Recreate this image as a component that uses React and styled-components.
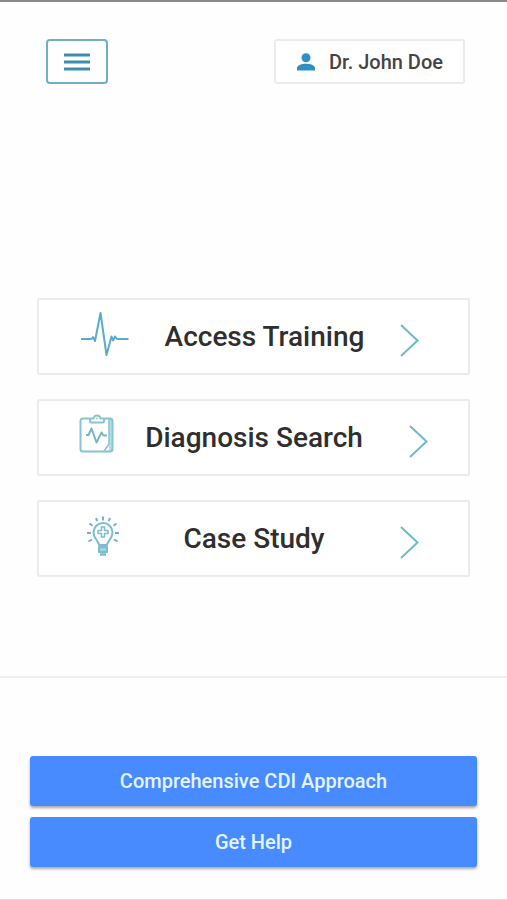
import React from 'react';
import styled, { createGlobalStyle } from 'styled-components';

const GlobalStyle = createGlobalStyle`
    * {
        box-sizing: border-box;
    }

    body {
        margin: 0;
        background-color: #fefefe;
        font-family: Roboto, 'Liberation Sans', sans-serif;
    }
`;

const Page = styled.div`
    display: flex;
    flex-direction: column;
    min-height: 100vh;
    border-top: 2px solid #8b898b;
    border-bottom: 1px solid #dedede;
`;

const Header = styled.header`
    display: flex;
    justify-content: space-between;
    padding: 37px 42px 0 46px;
`;

const MenuButton = styled.button`
    display: flex;
    align-items: center;
    justify-content: center;
    width: 62px;
    height: 45px;
    padding: 0;
    border: 2px solid #6fafc6;
    border-radius: 4px;
    background-color: #fff;
    cursor: pointer;
`;

const UserButton = styled.button`
    display: flex;
    align-items: center;
    gap: 13px;
    height: 45px;
    padding: 0 20px;
    border: 2px solid #ebebeb;
    border-radius: 3px;
    background-color: #fff;
    color: #444;
    font-family: inherit;
    font-size: 20px;
    font-weight: 500;
    cursor: pointer;
`;

const Menu = styled.main`
    display: flex;
    flex: 1;
    flex-direction: column;
    justify-content: center;
    gap: 24px;
    padding: 115px 37px 0;
`;

const Card = styled.button`
    display: flex;
    align-items: center;
    width: 100%;
    height: 77px;
    padding: 0 ${(props) => props.$right}px 0 ${(props) => props.$left}px;
    border: 2px solid #ebebeb;
    border-radius: 2px;
    background-color: #fff;
    font-family: inherit;
    cursor: pointer;
`;

const CardTitle = styled.span`
    flex: 1;
    color: #2f2f2f;
    font-size: 28px;
    font-weight: 500;
    line-height: 36px;
    text-align: center;
    white-space: nowrap;
`;

const Arrow = styled.span`
    display: flex;
    justify-content: flex-end;
    width: ${(props) => props.$width}px;
`;

const Footer = styled.footer`
    display: flex;
    flex-direction: column;
    gap: 11px;
    padding: 78px 30px 32px;
    border-top: 2px solid #efefef;
`;

const FooterButton = styled.button`
    height: 50px;
    padding: 0 16px;
    border: none;
    border-radius: 3px;
    background-color: #488aff;
    box-shadow: 0 2px 3px rgba(0, 0, 0, 0.35);
    color: #e3f6ff;
    font-family: inherit;
    font-size: 20px;
    font-weight: 500;
    cursor: pointer;
`;

const MenuIcon = () => (
    <svg width="26" height="18" viewBox="0 0 26 18" fill="none" stroke="#3e8dac" strokeWidth="2.8" aria-hidden="true">
        <path d="M0 2h26M0 9h26M0 16h26" />
    </svg>
);

const UserIcon = () => (
    <svg width="20" height="18" viewBox="0 0 20 18" fill="#2e8fc2" aria-hidden="true">
        <circle cx="10" cy="4.7" r="4.5" />
        <path d="M1 17.500v-2.500c0-2.800 5-4.300 9-4.300s9 1.500 9 4.300v2.500z" />
    </svg>
);

const PulseIcon = () => (
    <svg width="49" height="52" viewBox="0 0 49 52" fill="none" stroke="#5aaccb" strokeWidth="2" strokeLinejoin="round" aria-hidden="true">
        <path d="M1 28h10.500l1.500-2 2 4 5.500-28 6 42 5-18.500 1.500 4 2-4 2 2.500h11.500" />
    </svg>
);

const ClipboardIcon = () => (
    <svg width="35" height="52" viewBox="0 0 35 52" fill="none" stroke="#88c3d2" strokeWidth="2" strokeLinejoin="round" aria-hidden="true">
        <path d="M30 6.500h3v30q0 3-3 3z" fill="#b5dfea" stroke="none" />
        <path d="M10 6.500H4q-2.500 0-2.500 2.500v28q0 2.500 2.500 2.500h27q2.500 0 2.500-2.500V9q0-2.500-2.500-2.500h-5" />
        <path d="M30 7v25l-5 7" strokeWidth="1.500" />
        <path d="M11 9V6.500h3.500q.5-3 3.500-3t3.500 3H25V9q0 1.500-1.500 1.500h-11Q11 10.500 11 9z" />
        <circle cx="18" cy="6.500" r=".6" strokeWidth="1" />
        <path d="M7 23h2.500l3-6.500 5 14 5-10 2 3H28" stroke="#76b5c4" />
    </svg>
);

const BulbIcon = () => (
    <svg width="34" height="52" viewBox="0 0 34 52" fill="none" stroke="#7bbccf" strokeWidth="2" strokeLinejoin="round" aria-hidden="true">
        <path d="M13 32c0-4-5.500-6-5.500-12.500a9.500 9.500 0 0 1 19 0c0 6.500-5.500 8.500-5.500 12.500z" />
        <path d="M15.500 14h3v3.500H22v3h-3.500V24h-3v-3.500H12v-3h3.500z" strokeWidth="1.500" />
        <path d="M13 34h8v5h-8z" fill="#9dd4e3" />
        <path d="M14 41.500h6" strokeWidth="2.500" />
        <path
            d="M17 3.500v4M10 5l1.300 3.200M24 5l-1.300 3.200M3.500 10.500l3 2.200M30.500 10.500l-3 2.200M1 20h4M29 20h4M2.500 28.500l3.500-2M31.500 28.500l-3.500-2"
            stroke="#7aafba"
        />
    </svg>
);

const ChevronIcon = () => (
    <svg width="19" height="52" viewBox="0 0 19 52" fill="none" stroke="#6fb8c4" strokeWidth="2" aria-hidden="true">
        <path d="M1 14L17.500 29.500 1 45" />
    </svg>
);

const menuItems = [
    { title: 'Access Training', Icon: PulseIcon, left: 41, right: 49, arrowWidth: 19 },
    { title: 'Diagnosis Search', Icon: ClipboardIcon, left: 40, right: 40, arrowWidth: 34 },
    { title: 'Case Study', Icon: BulbIcon, left: 47, right: 49, arrowWidth: 31 },
];

const App = () => {
    return (
        <>
            <GlobalStyle />
            <Page>
                <Header>
                    <MenuButton aria-label="Menu">
                        <MenuIcon />
                    </MenuButton>
                    <UserButton>
                        <UserIcon />
                        Dr. John Doe
                    </UserButton>
                </Header>
                <Menu>
                    {menuItems.map(({ title, Icon, left, right, arrowWidth }) => (
                        <Card key={title} $left={left} $right={right}>
                            <Icon />
                            <CardTitle>{title}</CardTitle>
                            <Arrow $width={arrowWidth}>
                                <ChevronIcon />
                            </Arrow>
                        </Card>
                    ))}
                </Menu>
                <Footer>
                    <FooterButton>Comprehensive CDI Approach</FooterButton>
                    <FooterButton>Get Help</FooterButton>
                </Footer>
            </Page>
        </>
    );
};

export default App;
